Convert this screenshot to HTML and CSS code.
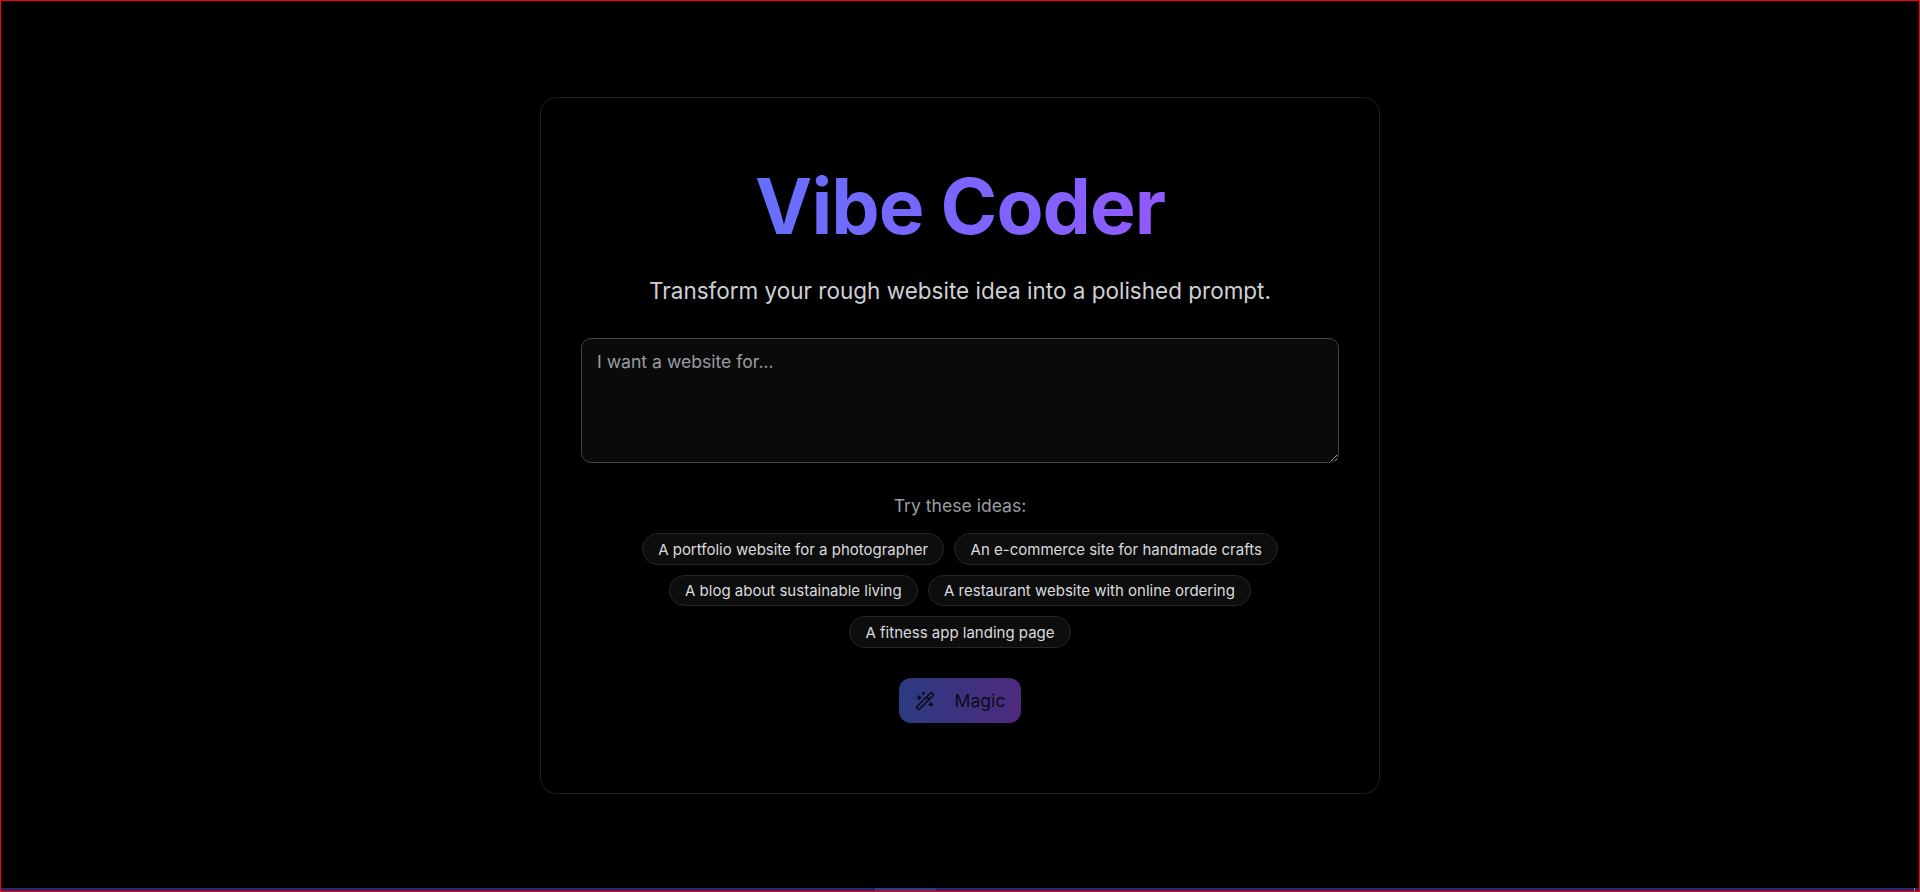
FILE: index.html
```html
<!DOCTYPE html>
<html>
  <head>
    <title>Vibe Coder</title>
    <link rel="stylesheet" href="styles.css">
  </head>
  <body>
    <main class="page">
      <div class="card">
        <h1 class="title">Vibe Coder</h1>
        <p class="subtitle">Transform your rough website idea into a polished prompt.</p>
        <textarea class="idea-input" placeholder="I want a website for..."></textarea>
        <p class="ideas-label">Try these ideas:</p>
        <div class="ideas">
          <button class="chip">A portfolio website for a photographer</button>
          <button class="chip">An e-commerce site for handmade crafts</button>
          <button class="chip">A blog about sustainable living</button>
          <button class="chip">A restaurant website with online ordering</button>
          <button class="chip">A fitness app landing page</button>
        </div>
        <button class="magic-button">
          <svg class="magic-icon" viewBox="0 0 24 24" fill="none" stroke="currentColor" stroke-width="2" stroke-linecap="round" stroke-linejoin="round">
            <path d="m21.64 3.64-1.28-1.28a1.21 1.21 0 0 0-1.72 0L2.36 18.64a1.21 1.21 0 0 0 0 1.72l1.28 1.28a1.2 1.2 0 0 0 1.72 0L21.64 5.36a1.2 1.2 0 0 0 0-1.72"/>
            <path d="m14 7 3 3"/>
            <path d="M5 6v4"/>
            <path d="M19 14v4"/>
            <path d="M10 2v2"/>
            <path d="M7 8H3"/>
            <path d="M21 16h-4"/>
            <path d="M11 3H9"/>
          </svg>
          <span>Magic</span>
        </button>
      </div>
    </main>
    <div class="bottom-bar">
      <div class="bottom-bar-thumb"></div>
      <div class="bottom-bar-tick"></div>
    </div>
  </body>
</html>
```

FILE: styles.css
```css
* {
  box-sizing: border-box;
}

html,
body {
  height: 100%;
}

body {
  margin: 0;
  display: flex;
  flex-direction: column;
  background-color: #000;
  border: 1px solid #ff0000;
  font-family: Inter, "Noto Sans", sans-serif;
}

.page {
  flex: 1;
  display: flex;
  justify-content: center;
  align-items: center;
  padding-top: 2px;
}

.card {
  width: 840px;
  height: 697px;
  padding: 40px;
  display: flex;
  flex-direction: column;
  align-items: center;
  border: 1px solid #1f1f1f;
  border-radius: 16px;
  background-color: #000;
}

.title {
  margin: 23px 0 0;
  font-size: 76.8px;
  line-height: 1.2;
  font-weight: 700;
  letter-spacing: -1px;
  color: transparent;
  background: linear-gradient(90deg, #666fff, #905aff);
  -webkit-background-clip: text;
  background-clip: text;
}

.subtitle {
  margin: 23px 0 33px;
  font-size: 22.5px;
  line-height: 1.3;
  color: #ced0d5;
}

.idea-input {
  width: 100%;
  height: 125px;
  padding: 12px 15px;
  background-color: #0a0a0a;
  border: 1px solid #444;
  border-radius: 10px;
  font-family: inherit;
  font-size: 17.6px;
  color: #ddd;
  outline: none;
}

.idea-input::placeholder {
  color: #9a9ca1;
}

.ideas-label {
  margin: 32px 0 15px;
  font-size: 17.6px;
  line-height: 1.3;
  color: #9a9ca1;
}

.ideas {
  display: flex;
  flex-wrap: wrap;
  justify-content: center;
  gap: 10px;
}

.chip {
  height: 31.5px;
  padding: 0 15.2px;
  background-color: #0d0d0d;
  border: 1px solid #262626;
  border-radius: 16px;
  font-family: inherit;
  font-size: 15px;
  color: #dadbdf;
  cursor: pointer;
}

.magic-button {
  margin-top: 30.5px;
  width: 122px;
  height: 45px;
  display: flex;
  align-items: center;
  justify-content: center;
  gap: 20px;
  background: linear-gradient(90deg, #2b3a80, #4e2a7e);
  border: none;
  border-radius: 12px;
  font-family: inherit;
  font-size: 17.6px;
  color: #0c0c14;
  cursor: pointer;
}

.magic-icon {
  width: 20px;
  height: 20px;
}

.bottom-bar {
  position: relative;
  height: 3px;
  background-color: #27296f;
}

.bottom-bar-thumb {
  position: absolute;
  left: 874px;
  width: 61px;
  height: 3px;
  background-color: #2f3d88;
}

.bottom-bar-tick {
  position: absolute;
  left: 1913px;
  width: 1px;
  height: 3px;
  background-color: #8a8a94;
}
```
